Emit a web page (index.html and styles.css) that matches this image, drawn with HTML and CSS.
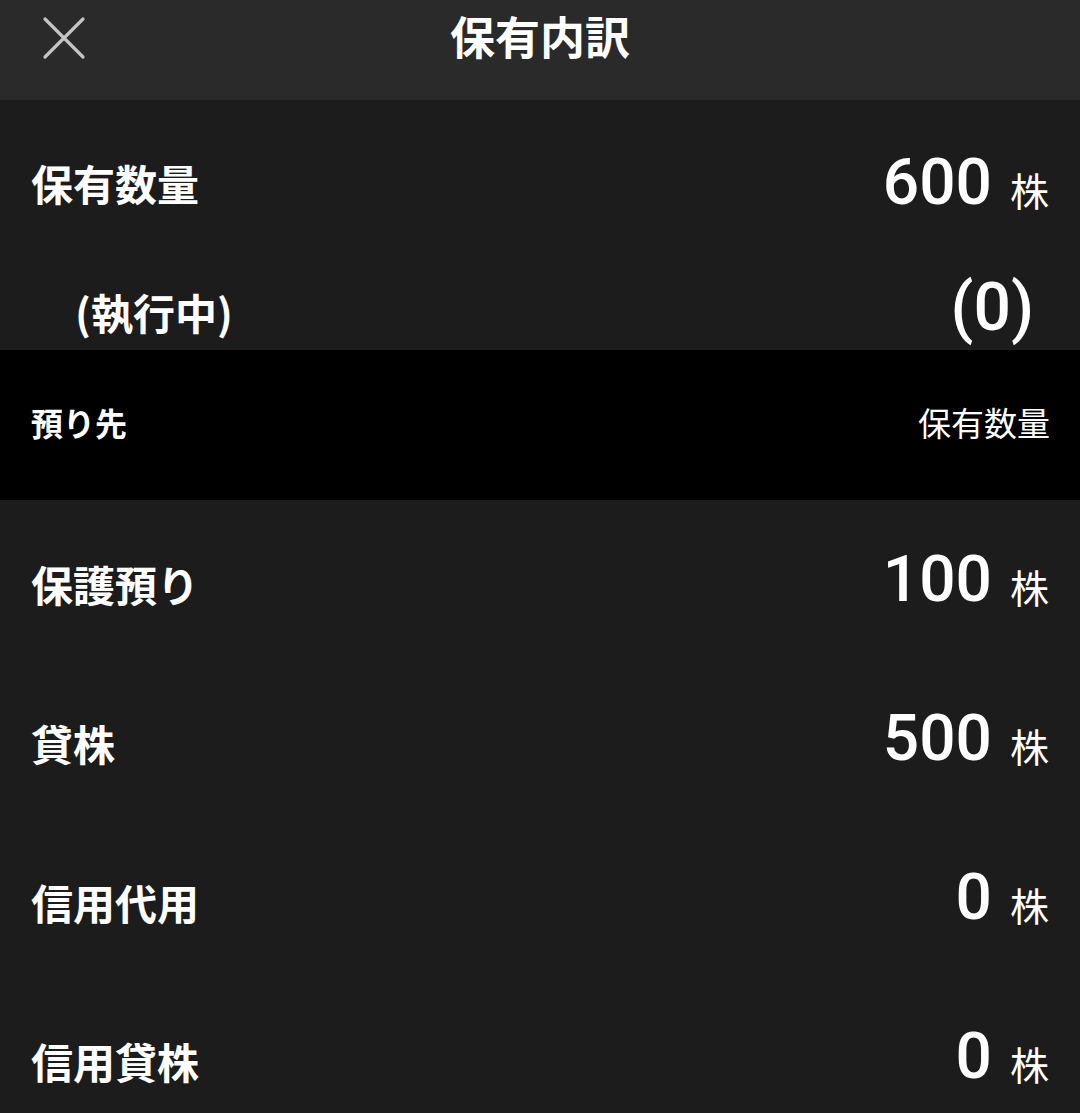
FILE: index.html
```html
<!DOCTYPE html>
<html lang="ja">
<head>
<meta charset="utf-8">
<title>保有内訳</title>
<link rel="stylesheet" href="styles.css">
</head>
<body>
<div class="app">
  <header class="header">
    <button class="close" aria-label="閉じる">
      <svg width="44" height="44" viewBox="0 0 44 44"><path d="M3 3 L41 41 M41 3 L3 41" stroke="#c4c4c4" stroke-width="3.2" stroke-linecap="round" fill="none"/></svg>
    </button>
    <h1 class="title">保有内訳</h1>
  </header>

  <section class="summary">
    <div class="row row-main">
      <span class="label">保有数量</span>
      <span class="value"><span class="num">600</span><span class="unit">株</span></span>
    </div>
    <div class="row row-sub">
      <span class="label sub">(執行中)</span>
      <span class="value"><span class="num paren">(0)</span></span>
    </div>
  </section>

  <div class="band">
    <span class="band-left">預り先</span>
    <span class="band-right">保有数量</span>
  </div>

  <section class="list">
    <div class="row item">
      <span class="label">保護預り</span>
      <span class="value"><span class="num">100</span><span class="unit">株</span></span>
    </div>
    <div class="row item">
      <span class="label">貸株</span>
      <span class="value"><span class="num">500</span><span class="unit">株</span></span>
    </div>
    <div class="row item">
      <span class="label">信用代用</span>
      <span class="value"><span class="num">0</span><span class="unit">株</span></span>
    </div>
    <div class="row item">
      <span class="label">信用貸株</span>
      <span class="value"><span class="num">0</span><span class="unit">株</span></span>
    </div>
  </section>
</div>
</body>
</html>
```

FILE: styles.css
```css
html, body {
  margin: 0;
  padding: 0;
  background: #1c1c1c;
}
body {
  width: 1080px;
  height: 1113px;
  overflow: hidden;
  font-family: "Noto Sans CJK JP", "Noto Sans", sans-serif;
  color: #ffffff;
}
.app {
  display: flex;
  flex-direction: column;
}
.header {
  height: 100px;
  background: #2a2a2a;
  display: flex;
  align-items: center;
  justify-content: center;
  position: relative;
}
.close {
  position: absolute;
  left: 42px;
  top: 16px;
  width: 44px;
  height: 44px;
  padding: 0;
  border: 0;
  background: transparent;
  display: flex;
}
.title {
  margin: 0 0 30px 0;
  font-size: 45px;
  font-weight: 700;
  line-height: 1;
  letter-spacing: 0;
}
.row {
  display: flex;
  justify-content: space-between;
  align-items: baseline;
  padding: 0 31px 0 31px;
}
.summary {
  height: 250px;
  display: flex;
  flex-direction: column;
}
.row-main {
  height: 150px;
  align-items: center;
  padding-top: 16px;
  box-sizing: border-box;
}
.row-sub {
  flex: 1;
  align-items: center;
  padding-left: 75px;
  padding-right: 46px;
}
.row-sub .label {
  position: relative;
  top: 12px;
}
.row-sub .value {
  position: relative;
  top: 8px;
}
.label {
  font-size: 42px;
  font-weight: 700;
  line-height: 1;
}
.value {
  display: flex;
  align-items: baseline;
  gap: 18px;
}
.num {
  font-family: Roboto, "Noto Sans", sans-serif;
  font-weight: 500;
  font-size: 64px;
  line-height: 1;
}
.paren {
  font-size: 66px;
}
.unit {
  font-size: 39px;
  font-weight: 400;
  line-height: 1;
  position: relative;
  top: 2px;
}
.band {
  height: 150px;
  background: #000000;
  display: flex;
  justify-content: space-between;
  align-items: center;
  padding: 0 30px 6px 31px;
  box-sizing: border-box;
  font-size: 33px;
  line-height: 1;
}
.band-left {
  font-weight: 700;
  font-size: 32px;
}
.band-right {
  font-weight: 400;
}
.list {
  display: flex;
  flex-direction: column;
}
.item {
  height: 159px;
  align-items: center;
}
.item .label {
  position: relative;
  top: 4px;
}
.item .value {
  position: relative;
  top: 0px;
}
```
